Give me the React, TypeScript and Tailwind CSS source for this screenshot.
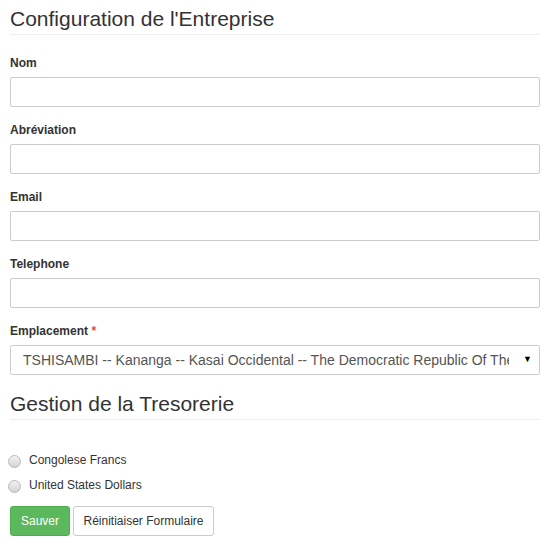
import React from "react"

const fieldNames = ["Nom", "Abréviation", "Email", "Telephone"]

function Field({ label }: { label: string }) {
  return (
    <div className="mb-[15px]">
      <label className="block text-[12px] font-bold leading-[17px] text-[#333] mb-[5px]">{label}</label>
      <input
        type="text"
        className="block w-[530px] h-[30px] border border-[#ccc] rounded-[2px] bg-white px-[12px] text-[14px] text-[#555] outline-none"
      />
    </div>
  )
}

function Radio({ label }: { label: string }) {
  return (
    <label className="flex items-center h-[20px] text-[12px] text-[#333]">
      <span className="w-[13px] h-[13px] rounded-full border border-[#b8b8b8] bg-gradient-to-b from-[#f2f2f2] to-[#d4d4d4] mr-[8px] -ml-[2px] mt-[3px]" />
      {label}
    </label>
  )
}

export default function App() {
  return (
    <div className="w-[553px] h-[547px] bg-white pl-[10px] pt-[7px] font-['Liberation_Sans',Arial,sans-serif] text-[#333]">
      {/* Configuration */}
      <h3 className="w-[530px] text-[21px] leading-[23px] font-normal pb-[4px] border-b border-[#eee] mb-[20px]">
        Configuration de l'Entreprise
      </h3>

      {fieldNames.map((name) => (
        <Field key={name} label={name} />
      ))}

      <div>
        <label className="block text-[12px] font-bold leading-[17px] text-[#333] mb-[5px]">
          Emplacement <span className="text-[#e74c3c]">*</span>
        </label>
        <div className="flex items-center w-[530px] h-[30px] border border-[#ccc] rounded-[2px] bg-white pl-[12px] pr-[7px] text-[14px] text-[#555]">
          <span className="flex-1 overflow-hidden whitespace-nowrap mr-[14px]">
            TSHISAMBI -- Kananga -- Kasai Occidental -- The Democratic Republic Of The Congo
          </span>
          <span className="text-[9px] text-black">▼</span>
        </div>
      </div>

      {/* Tresorerie */}
      <h3 className="w-[530px] mt-[17px] text-[21px] leading-[23px] font-normal pb-[4px] border-b border-[#eee]">
        Gestion de la Tresorerie
      </h3>

      <div className="mt-[30px] flex flex-col gap-[5px]">
        <Radio label="Congolese Francs" />
        <Radio label="United States Dollars" />
      </div>

      <div className="mt-[11px] flex gap-[3px]">
        <button className="h-[30px] px-[10px] w-[60px] rounded-[3px] bg-[#5cb85c] border border-[#4cae4c] text-white text-[12px]">
          Sauver
        </button>
        <button className="h-[30px] w-[141px] rounded-[3px] bg-white border border-[#ccc] text-[#333] text-[12px]">
          Réinitiaiser Formulaire
        </button>
      </div>
    </div>
  )
}
